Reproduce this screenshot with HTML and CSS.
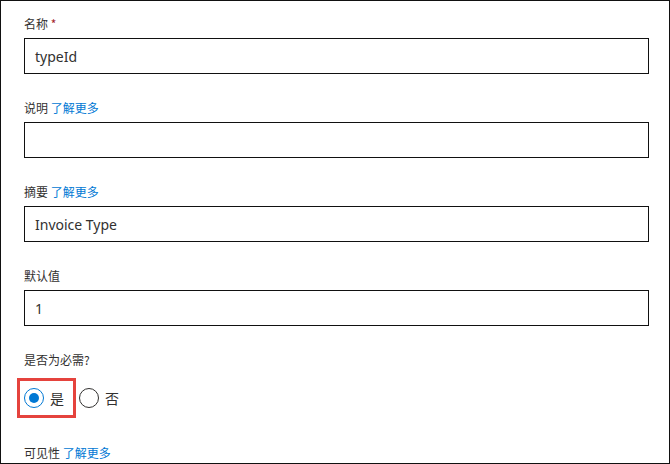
FILE: index.html
```html
<!DOCTYPE html>
<html lang="zh">
<head>
  <meta charset="UTF-8"/>
  <meta name="viewport" content="width=device-width, initial-scale=1.0"/>
  <title>参数</title>
  <link rel="stylesheet" href="styles.css">
</head>
<body>
  <form class="panel">
    <div class="field">
      <label class="label">名称 <span class="req">*</span></label>
      <div class="input">typeId</div>
    </div>
    <div class="field">
      <label class="label">说明 <a class="more" href="#">了解更多</a></label>
      <div class="input"></div>
    </div>
    <div class="field">
      <label class="label">摘要 <a class="more" href="#">了解更多</a></label>
      <div class="input">Invoice Type</div>
    </div>
    <div class="field">
      <label class="label">默认值</label>
      <div class="input">1</div>
    </div>
    <div class="field">
      <label class="label label-radio">是否为必需?</label>
      <div class="radio-row">
        <div class="option highlight">
          <span class="radio checked"></span>
          <span>是</span>
        </div>
        <div class="option">
          <span class="radio"></span>
          <span>否</span>
        </div>
      </div>
    </div>
    <div class="field last">
      <label class="label">可见性 <a class="more" href="#">了解更多</a></label>
    </div>
  </form>
</body>
</html>
```

FILE: styles.css
```css
* {
  margin: 0;
  padding: 0;
  box-sizing: border-box;
}
html,
body {
  height: 100%;
}
body {
  border: 1px solid #111;
  overflow: hidden;
  background: #fff;
  color: #323130;
  font-family: "Noto Sans", "Noto Sans CJK SC", sans-serif;
}
.panel {
  padding: 15px 20px 0 23px;
  display: flex;
  flex-direction: column;
}
.field {
  display: flex;
  flex-direction: column;
  margin-bottom: 26px;
}
.field.last {
  margin-bottom: 0;
}
.label {
  font-family: "Noto Sans CJK SC", sans-serif;
  font-size: 12px;
  line-height: 16px;
  height: 16px;
  margin-bottom: 6px;
  color: #323130;
}
.field.last .label {
  margin-bottom: 0;
}
.label-radio {
  margin-bottom: 10px;
}
.req {
  color: #a4262c;
}
.more {
  color: #0078d4;
  text-decoration: none;
}
.input {
  height: 36px;
  border: 1px solid #111;
  padding: 1px 10px 0;
  font-size: 14px;
  line-height: 34px;
  color: #323130;
}
.radio-row {
  display: flex;
  align-items: center;
  font-family: "Noto Sans CJK SC", sans-serif;
  font-size: 14px;
  margin-bottom: 1px;
}
.option {
  display: flex;
  align-items: center;
  gap: 6px;
  margin-left: 3px;
}
.highlight {
  border: 3px solid #e5433d;
  padding: 7px 9px 7px 4px;
  margin-left: -7px;
}
.radio {
  width: 20px;
  height: 20px;
  border: 1px solid #323130;
  border-radius: 50%;
  display: flex;
  align-items: center;
  justify-content: center;
}
.radio.checked {
  border-color: #0078d4;
}
.radio.checked::after {
  content: "";
  width: 10px;
  height: 10px;
  border-radius: 50%;
  background: #0078d4;
}
```
